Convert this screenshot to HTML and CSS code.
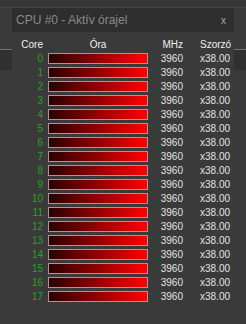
FILE: index.html
```html
<html>
<head>
<title>CPU #0 - Aktív órajel</title>
<link rel="stylesheet" href="styles.css">
</head>
<body>
<div class="win">
  <div class="titlebar">
    <span class="title">CPU #0 - Aktív órajel</span>
    <span class="close">x</span>
  </div>
  <div class="grid">
    <div class="hd core">Core</div><div class="hd ora">Óra</div><div class="hd mhz">MHz</div><div class="hd mult">Szorzó</div>

    <div class="core">0</div><div class="bar"></div><div class="mhz">3960</div><div class="mult">x38.00</div>
    <div class="core">1</div><div class="bar"></div><div class="mhz">3960</div><div class="mult">x38.00</div>
    <div class="core">2</div><div class="bar"></div><div class="mhz">3960</div><div class="mult">x38.00</div>
    <div class="core">3</div><div class="bar"></div><div class="mhz">3960</div><div class="mult">x38.00</div>
    <div class="core">4</div><div class="bar"></div><div class="mhz">3960</div><div class="mult">x38.00</div>
    <div class="core">5</div><div class="bar"></div><div class="mhz">3960</div><div class="mult">x38.00</div>
    <div class="core">6</div><div class="bar"></div><div class="mhz">3960</div><div class="mult">x38.00</div>
    <div class="core">7</div><div class="bar"></div><div class="mhz">3960</div><div class="mult">x38.00</div>
    <div class="core">8</div><div class="bar"></div><div class="mhz">3960</div><div class="mult">x38.00</div>
    <div class="core">9</div><div class="bar"></div><div class="mhz">3960</div><div class="mult">x38.00</div>
    <div class="core">10</div><div class="bar"></div><div class="mhz">3960</div><div class="mult">x38.00</div>
    <div class="core">11</div><div class="bar"></div><div class="mhz">3960</div><div class="mult">x38.00</div>
    <div class="core">12</div><div class="bar"></div><div class="mhz">3960</div><div class="mult">x38.00</div>
    <div class="core">13</div><div class="bar"></div><div class="mhz">3960</div><div class="mult">x38.00</div>
    <div class="core">14</div><div class="bar"></div><div class="mhz">3960</div><div class="mult">x38.00</div>
    <div class="core">15</div><div class="bar"></div><div class="mhz">3960</div><div class="mult">x38.00</div>
    <div class="core">16</div><div class="bar"></div><div class="mhz">3960</div><div class="mult">x38.00</div>
    <div class="core">17</div><div class="bar"></div><div class="mhz">3960</div><div class="mult">x38.00</div>
  </div>
</div>
</body>
</html>
```

FILE: styles.css
```css
html, body { margin:0; padding:0; }
body {
  width:246px; height:324px; overflow:hidden;
  font-family:"Liberation Sans", Arial, sans-serif;
  background:linear-gradient(#363636 0 7px, #444 7px 8px, #3a3a3a 8px 49px, #707070 49px 50px, #303030 50px 70px, #3a3a3a 70px);
}
.win { margin:8px 12px 0; height:316px; background:#3a3a3a; }

.titlebar { height:24px; background:#2e2e2e; display:flex; align-items:center; justify-content:space-between; padding:0 8px 0 4px; }
.title { font-size:12px; color:#8a8a8a; }
.close { font-size:10px; color:#a8a8a8; }

.grid { display:grid; grid-template-columns:36px 100px 35px 1fr; grid-auto-rows:14px; padding-top:6px; font-size:10px; line-height:14px; }
.core { text-align:right; padding-right:5px; color:#20a820; }
.mhz { text-align:right; color:#e2e2e2; }
.mult { padding-left:17px; color:#e2e2e2; }
.hd { color:#f0f0f0; }
.ora { text-align:center; }
.bar { margin-top:1px; height:11px; box-sizing:border-box; border:1px solid #9c9c9c; background:linear-gradient(to right, #2a0000, #ff0000); }
```
